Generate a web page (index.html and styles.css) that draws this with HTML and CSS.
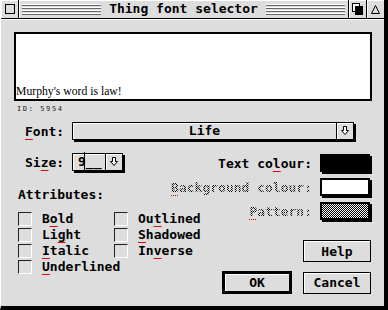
FILE: index.html
```html
<!DOCTYPE html>
<html lang="en">
<head>
  <meta charset="UTF-8">
  <title>Thing font selector</title>
  <link rel="stylesheet" href="styles.css">
</head>
<body>
  <div class="window">
    <div class="titlebar">
      <div class="gadget closer"><span class="closer-box"></span></div>
      <div class="mover">
        <span class="lines"></span>
        <span class="title">Thing font selector</span>
        <span class="lines"></span>
      </div>
      <div class="gadget">
        <svg width="11" height="12" viewBox="0 0 11 12">
          <rect x="0.5" y="0.5" width="7" height="8" fill="#fff" stroke="#000"/>
          <rect x="3" y="3" width="8" height="9" fill="#000"/>
        </svg>
      </div>
      <div class="gadget">
        <svg width="9" height="9" viewBox="0 0 9 9">
          <path d="M4.5 0.5 L8.5 8.5 H0.5 Z" fill="none" stroke="#000"/>
        </svg>
      </div>
    </div>

    <div class="dialog">
      <div class="preview"><span>Murphy's word is law!</span></div>
      <div class="font-id">ID: 5954</div>

      <div class="field-row font-row">
        <span class="label"><u class="key">F</u>ont:</span>
        <div class="popup font-popup">
          <span class="popup-value">Life</span>
          <span class="popup-arrow">
            <svg width="10" height="10" viewBox="0 0 10 10"><path d="M3.5 0.5 H6.5 V4.5 H8.5 L5 8.5 L1.5 4.5 H3.5 Z" fill="#fff" stroke="#000"/></svg>
          </span>
        </div>
      </div>

      <div class="lower">
        <div class="left-col">
          <div class="field-row size-row">
            <span class="label">Si<u class="key">z</u>e:</span>
            <div class="popup size-popup">
              <span class="size-input"><span>9</span><i class="caret"></i><span>__</span></span>
              <span class="popup-arrow">
                <svg width="10" height="10" viewBox="0 0 10 10"><path d="M3.5 0.5 H6.5 V4.5 H8.5 L5 8.5 L1.5 4.5 H3.5 Z" fill="#fff" stroke="#000"/></svg>
              </span>
            </div>
          </div>

          <div class="group-title">Attributes:</div>
          <div class="attrs">
            <label class="check"><span class="box"></span><span>B<u class="key">o</u>ld</span></label>
            <label class="check"><span class="box"></span><span>Ou<u class="key">t</u>lined</span></label>
            <label class="check"><span class="box"></span><span>Li<u class="key">g</u>ht</span></label>
            <label class="check"><span class="box"></span><span><u class="key">S</u>hadowed</span></label>
            <label class="check"><span class="box"></span><span><u class="key">I</u>talic</span></label>
            <label class="check"><span class="box"></span><span>In<u class="key">v</u>erse</span></label>
            <label class="check"><span class="box"></span><span><u class="key">U</u>nderlined</span></label>
          </div>
        </div>

        <div class="right-col">
          <div class="colour-row">
            <span class="label">Text co<u class="key">l</u>our:</span>
            <span class="swatch swatch-black"></span>
          </div>
          <div class="colour-row disabled">
            <span class="label"><u class="key">B</u>ackground colour:</span>
            <span class="swatch swatch-white"></span>
          </div>
          <div class="colour-row disabled">
            <span class="label"><u class="key">P</u>attern:</span>
            <span class="swatch swatch-pattern"></span>
          </div>
          <button class="btn help">Help</button>
          <div class="btn-row">
            <button class="btn btn-default">OK</button>
            <button class="btn">Cancel</button>
          </div>
        </div>
      </div>
    </div>
  </div>
</body>
</html>
```

FILE: styles.css
```css
body {
  margin: 0;
  background-color: #000;
  font-family: 'DejaVu Sans Mono', monospace;
  font-size: 13px;
  font-weight: bold;
  color: #000;
}
.window {
  width: 383px;
  height: 306px;
  border-left: 1px solid #fff;
  border-right: 4px solid #000;
  border-bottom: 4px solid #000;
  background-color: #dddddd;
  display: flex;
  flex-direction: column;
}

/* title bar */
.titlebar {
  display: flex;
  height: 18px;
  border-bottom: 1px solid #000;
}
.gadget {
  width: 17px;
  display: flex;
  align-items: center;
  justify-content: center;
  border-left: 1px solid #000;
  box-shadow: inset 1px 1px #fff;
}
.closer {
  border-left: none;
  border-right: 1px solid #000;
}
.closer-box {
  width: 8px;
  height: 8px;
  border: 1px solid #000;
}
.mover {
  flex: 1;
  display: flex;
  align-items: center;
  padding: 0 3px;
  box-shadow: inset 1px 1px #fff;
}
.lines {
  flex: 1;
  height: 12px;
  margin-top: 2px;
  background: repeating-linear-gradient(to bottom, #fff 0 1px, #666 1px 2px, #ddd 2px 3px);
}
.title {
  padding: 0 8px;
  line-height: 18px;
}

/* dialog body */
.dialog {
  flex: 1;
  padding: 12px 12px 0 13px;
  border-top: 1px solid #fff;
}
.preview {
  height: 69px;
  box-sizing: border-box;
  border: 2px solid #000;
  background-color: #fff;
  display: flex;
  align-items: flex-end;
  padding: 0 0 2px 0;
  font: normal 11.7px/11px 'Liberation Serif', serif;
}
.font-id {
  margin: 4px 0 0 3px;
  font: normal 7px/9px 'DejaVu Sans Mono', monospace;
  letter-spacing: 1.6px;
  color: #222;
}
.key {
  text-decoration: underline;
  text-decoration-color: #e00000;
  text-decoration-thickness: 1px;
  text-underline-offset: 3px;
}
.field-row {
  display: flex;
  align-items: center;
  margin-left: 11px;
}
.field-row .label {
  width: 47px;
}
.font-row {
  margin-top: 8px;
}
.popup {
  display: flex;
  height: 18px;
  box-sizing: border-box;
  border: 1px solid #000;
  box-shadow: 2px 2px 0 #000;
  background-color: #ddd;
}
.font-popup {
  width: 282px;
}
.popup-value {
  flex: 1;
  text-align: center;
  line-height: 16px;
  box-shadow: inset 1px 1px #fff;
}
.popup-arrow {
  width: 16px;
  border-left: 1px solid #000;
  display: flex;
  align-items: center;
  justify-content: center;
  box-shadow: inset 1px 1px #fff;
}

.lower {
  display: flex;
  margin-top: 13px;
}
.left-col {
  width: 192px;
  flex-shrink: 0;
  padding-left: 4px;
}
.size-row {
  margin-left: 7px;
}
.size-popup {
  width: 51px;
}
.size-input {
  flex: 1;
  display: flex;
  align-items: center;
  padding-left: 5px;
  line-height: 16px;
  box-shadow: inset 1px 1px #fff;
}
.caret {
  width: 1px;
  height: 21px;
  margin-left: -2px;
  margin-right: 1px;
  background-color: #000;
}
.group-title {
  margin-top: 16px;
  line-height: 16px;
}
.attrs {
  margin-top: 9px;
  display: grid;
  grid-template-columns: 96px 96px;
  row-gap: 2px;
}
.check {
  display: flex;
  align-items: center;
  gap: 10px;
  height: 14px;
  line-height: 14px;
  white-space: nowrap;
}
.box {
  flex-shrink: 0;
  width: 14px;
  height: 14px;
  box-sizing: border-box;
  border-top: 1px solid #222;
  border-left: 1px solid #222;
  border-right: 1px solid #fff;
  border-bottom: 1px solid #fff;
}

.right-col {
  flex: 1;
  min-width: 0;
  display: flex;
  flex-direction: column;
  align-items: flex-end;
  padding-right: 2px;
}
.colour-row {
  display: flex;
  align-items: center;
  gap: 8px;
  height: 18px;
  margin-top: 6px;
  white-space: nowrap;
}
.colour-row:first-child {
  margin-top: 1px;
}
.disabled .label {
  color: transparent;
  background: repeating-conic-gradient(#000 0 25%, transparent 0 50%) 0 0 / 2px 2px;
  -webkit-background-clip: text;
  background-clip: text;
}
.disabled .key {
  text-decoration-style: dotted;
}
.swatch {
  width: 50px;
  height: 18px;
  box-sizing: border-box;
  border: 2px solid #000;
  box-shadow: 2px 2px 0 #000;
}
.swatch-black {
  background-color: #000;
}
.swatch-white {
  background-color: #fff;
}
.swatch-pattern {
  background: repeating-conic-gradient(#000 0 25%, #fff 0 50%) 0 0 / 2px 2px;
}

.btn {
  font: inherit;
  color: #000;
  width: 68px;
  height: 22px;
  padding: 0;
  background-color: #ddd;
  border: 1px solid #000;
  box-shadow: inset 1px 1px #fff;
}
.help {
  margin-top: 20px;
  margin-right: -1px;
}
.btn-row {
  display: flex;
  align-items: center;
  gap: 11px;
  margin-top: 9px;
  margin-right: -1px;
}
.btn-default {
  width: 70px;
  height: 23px;
  border-width: 3px;
}
```
